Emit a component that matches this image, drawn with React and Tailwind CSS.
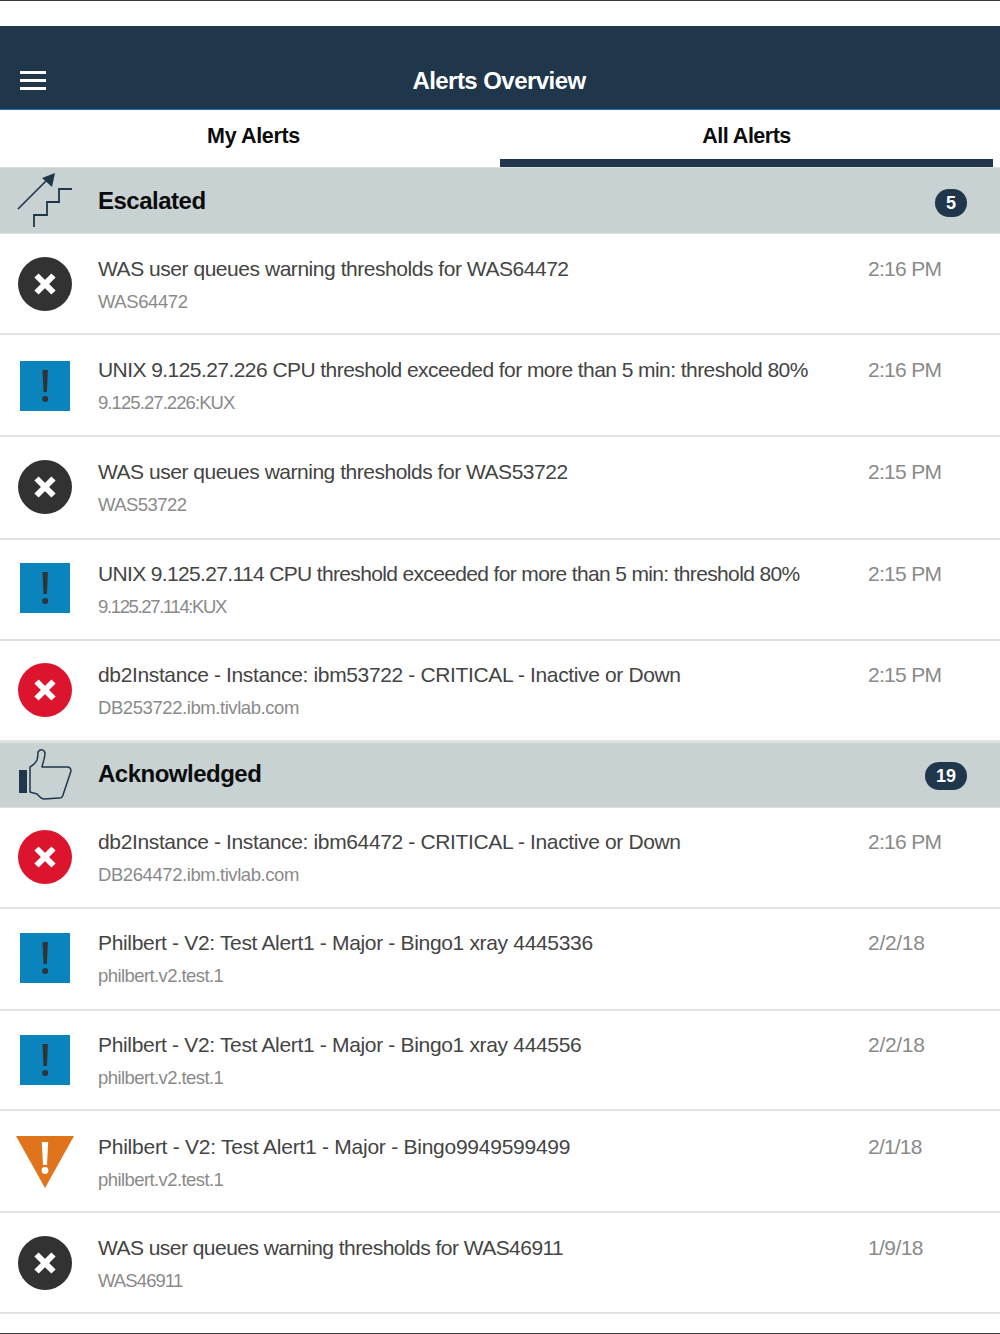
const NAVY = '#1f364b';

function CircleX({ color }) {
  return (
    <svg width="54" height="54" viewBox="0 0 54 54">
      <circle cx="27" cy="27" r="27" fill={color} />
      <path d="M18.5 18.5L35.5 35.5M35.5 18.5L18.5 35.5" stroke="#fff" strokeWidth="6" />
    </svg>
  );
}

function SquareBang() {
  return (
    <svg width="50" height="50" viewBox="0 0 50 50">
      <rect width="50" height="50" fill="#0a84bd" />
      <path d="M22.5 9h5.4l-1 22h-3.4z" fill="#333" />
      <circle cx="25.2" cy="38" r="3" fill="#333" />
    </svg>
  );
}

function TriangleBang() {
  return (
    <svg width="58" height="52" viewBox="0 0 58 52">
      <path d="M0 0H58L29 52z" fill="#e0741c" />
      <path d="M25.8 6h6.4l-1.2 23h-4z" fill="#fff" />
      <circle cx="29" cy="34.5" r="3.4" fill="#fff" />
    </svg>
  );
}

function StairsIcon() {
  return (
    <svg width="56" height="58" viewBox="0 0 56 58" fill="none" stroke={NAVY}>
      <path d="M1 39L29 11" strokeWidth="1.7" />
      <path d="M38 3L25 8L35 17z" fill={NAVY} stroke="none" />
      <path d="M17 57V45H30V32H42V19H55" strokeWidth="1.8" />
    </svg>
  );
}

function ThumbIcon() {
  return (
    <svg width="56" height="52" viewBox="0 0 56 52" fill="none">
      <rect x="2" y="22" width="8" height="23" fill={NAVY} />
      <path
        d="M13 19C17 17 19 14 20 12C21 9 21 6 21 4C23 1 27 1 28 5C28 10 26 14 25 19H50C53 19 54 20 54 23L46 47C45 50 44 50 42 50L27 51C24 51 22 48 20 46L13 44Z"
        stroke={NAVY}
        strokeWidth="1.5"
        strokeLinejoin="round"
      />
    </svg>
  );
}

const ICONS = {
  dark: <CircleX color="#323232" />,
  red: <CircleX color="#dc142d" />,
  blue: <SquareBang />,
  orange: <TriangleBang />,
};

const ESCALATED = [
  { kind: 'dark', title: 'WAS user queues warning thresholds for WAS64472', sub: 'WAS64472', time: '2:16 PM', row: 'h-[101px]', top: 'pt-[20px]', nudge: '', t: 'tracking-[-0.46px]', s: 'tracking-[-0.42px]', d: 'tracking-[-0.7px]' },
  { kind: 'blue', title: 'UNIX 9.125.27.226 CPU threshold exceeded for more than 5 min: threshold 80%', sub: '9.125.27.226:KUX', time: '2:16 PM', row: 'h-[102px]', top: 'pt-[20px]', nudge: 'pt-[2px]', t: 'tracking-[-0.56px]', s: 'tracking-[-0.92px]', d: 'tracking-[-0.7px]' },
  { kind: 'dark', title: 'WAS user queues warning thresholds for WAS53722', sub: 'WAS53722', time: '2:15 PM', row: 'h-[103px]', top: 'pt-[20px]', nudge: 'pb-[2px]', t: 'tracking-[-0.48px]', s: 'tracking-[-0.55px]', d: 'tracking-[-0.7px]' },
  { kind: 'blue', title: 'UNIX 9.125.27.114 CPU threshold exceeded for more than 5 min: threshold 80%', sub: '9.125.27.114:KUX', time: '2:15 PM', row: 'h-[101px]', top: 'pt-[19px]', nudge: 'pb-[4px]', t: 'tracking-[-0.65px]', s: 'tracking-[-1.36px]', d: 'tracking-[-0.7px]' },
  { kind: 'red', title: 'db2Instance - Instance: ibm53722 - CRITICAL - Inactive or Down', sub: 'DB253722.ibm.tivlab.com', time: '2:15 PM', row: 'h-[101px]', top: 'pt-[19px]', nudge: 'pb-[2px]', t: 'tracking-[-0.36px]', s: 'tracking-[-0.43px]', d: 'tracking-[-0.7px]' },
];

const ACKNOWLEDGED = [
  { kind: 'red', title: 'db2Instance - Instance: ibm64472 - CRITICAL - Inactive or Down', sub: 'DB264472.ibm.tivlab.com', time: '2:16 PM', row: 'h-[101px]', top: 'pt-[19px]', nudge: 'pb-[2px]', t: 'tracking-[-0.36px]', s: 'tracking-[-0.43px]', d: 'tracking-[-0.7px]' },
  { kind: 'blue', title: 'Philbert - V2: Test Alert1 - Major - Bingo1 xray 4445336', sub: 'philbert.v2.test.1', time: '2/2/18', row: 'h-[102px]', top: 'pt-[19px]', nudge: 'pb-[2px]', t: 'tracking-[-0.33px]', s: 'tracking-[-0.58px]', d: 'tracking-[-0.3px]' },
  { kind: 'blue', title: 'Philbert - V2: Test Alert1 - Major - Bingo1 xray 444556', sub: 'philbert.v2.test.1', time: '2/2/18', row: 'h-[100px]', top: 'pt-[19px]', nudge: '', t: 'tracking-[-0.33px]', s: 'tracking-[-0.58px]', d: 'tracking-[-0.3px]' },
  { kind: 'orange', title: 'Philbert - V2: Test Alert1 - Major - Bingo9949599499', sub: 'philbert.v2.test.1', time: '2/1/18', row: 'h-[102px]', top: 'pt-[21px]', nudge: 'pt-[2px]', t: 'tracking-[-0.25px]', s: 'tracking-[-0.58px]', d: 'tracking-[-0.8px]' },
  { kind: 'dark', title: 'WAS user queues warning thresholds for WAS46911', sub: 'WAS46911', time: '1/9/18', row: 'h-[101px]', top: 'pt-[20px]', nudge: '', t: 'tracking-[-0.54px]', s: 'tracking-[-0.9px]', d: 'tracking-[-0.6px]' },
];

function SectionHeader({ icon, title, count, height, iconShift, titleShift, badgeShift }) {
  return (
    <div className={`${height} shrink-0 flex items-center bg-[#c8d2d3] border-y border-[#dcdfdf]`}>
      <div className={`${iconShift} w-[98px] shrink-0 pl-[17px] flex items-center`}>{icon}</div>
      <span className={`${titleShift} flex-1 text-[24px] font-bold tracking-[-0.5px] text-[#0c0c0c]`}>{title}</span>
      <span className={`${badgeShift} mr-[33px] h-[28px] min-w-[32px] px-[11px] rounded-full bg-[#1f364b] text-white text-[18px] font-bold flex items-center justify-center`}>
        {count}
      </span>
    </div>
  );
}

function AlertRow({ a }) {
  return (
    <div className={`${a.row} shrink-0 flex border-b-2 border-[#e2e2e2]`}>
      <div className={`${a.nudge} w-[90px] shrink-0 flex items-center justify-center`}>{ICONS[a.kind]}</div>
      <div className={`${a.top} ml-[8px] flex-1`}>
        <div className={`${a.t} text-[21px] leading-[30px] text-[#444444] whitespace-nowrap`}>{a.title}</div>
        <div className={`${a.s} mt-[3px] text-[18.5px] leading-[30px] text-[#8a8a8a] whitespace-nowrap`}>{a.sub}</div>
      </div>
      <div className={`${a.top} ${a.d} w-[132px] shrink-0 text-[21px] leading-[30px] text-[#8a8a8a]`}>{a.time}</div>
    </div>
  );
}

export default function App() {
  return (
    <div className="h-[1334px] w-[1000px] overflow-hidden flex flex-col bg-white border-y border-[#3a3a3a] font-['Liberation_Sans',Arial,sans-serif]">
      <div className="h-[25px] shrink-0" />
      <header className="h-[84px] shrink-0 bg-[#1f364b] flex items-end relative border-b border-[#2a6cc0]">
        <div className="ml-[20px] mb-[19px] w-[26px] flex flex-col gap-[5px]">
          <span className="h-[3px] bg-white" />
          <span className="h-[3px] bg-white" />
          <span className="h-[3px] bg-white" />
        </div>
        <h1 className="absolute inset-x-0 bottom-[13px] pr-[2px] text-center text-[24px] leading-[30px] font-bold tracking-[-0.55px] text-white">
          Alerts Overview
        </h1>
      </header>
      <nav className="h-[57px] shrink-0 flex pr-[7px]">
        <div className="w-[500px] text-center pl-[7px] pt-[11px] text-[21.5px] leading-[30px] font-bold tracking-[-0.35px] text-[#0c0c0c]">
          My Alerts
        </div>
        <div className="flex-1 text-center pt-[11px] text-[21.5px] leading-[30px] font-bold tracking-[-0.5px] text-[#0c0c0c] border-b-[8px] border-[#1f364b]">
          All Alerts
        </div>
      </nav>
      <SectionHeader
        icon={<StairsIcon />}
        title="Escalated"
        count="5"
        height="h-[67px]"
        iconShift="mt-[-3px]"
        titleShift="mt-[1px]"
        badgeShift="mt-[5px]"
      />
      {ESCALATED.map(a => (
        <AlertRow key={a.title} a={a} />
      ))}
      <SectionHeader
        icon={<ThumbIcon />}
        title="Acknowledged"
        count="19"
        height="h-[66px]"
        iconShift="mt-[-3px]"
        titleShift="mt-[-2px]"
        badgeShift="mt-[2px]"
      />
      {ACKNOWLEDGED.map(a => (
        <AlertRow key={a.title} a={a} />
      ))}
    </div>
  );
}
